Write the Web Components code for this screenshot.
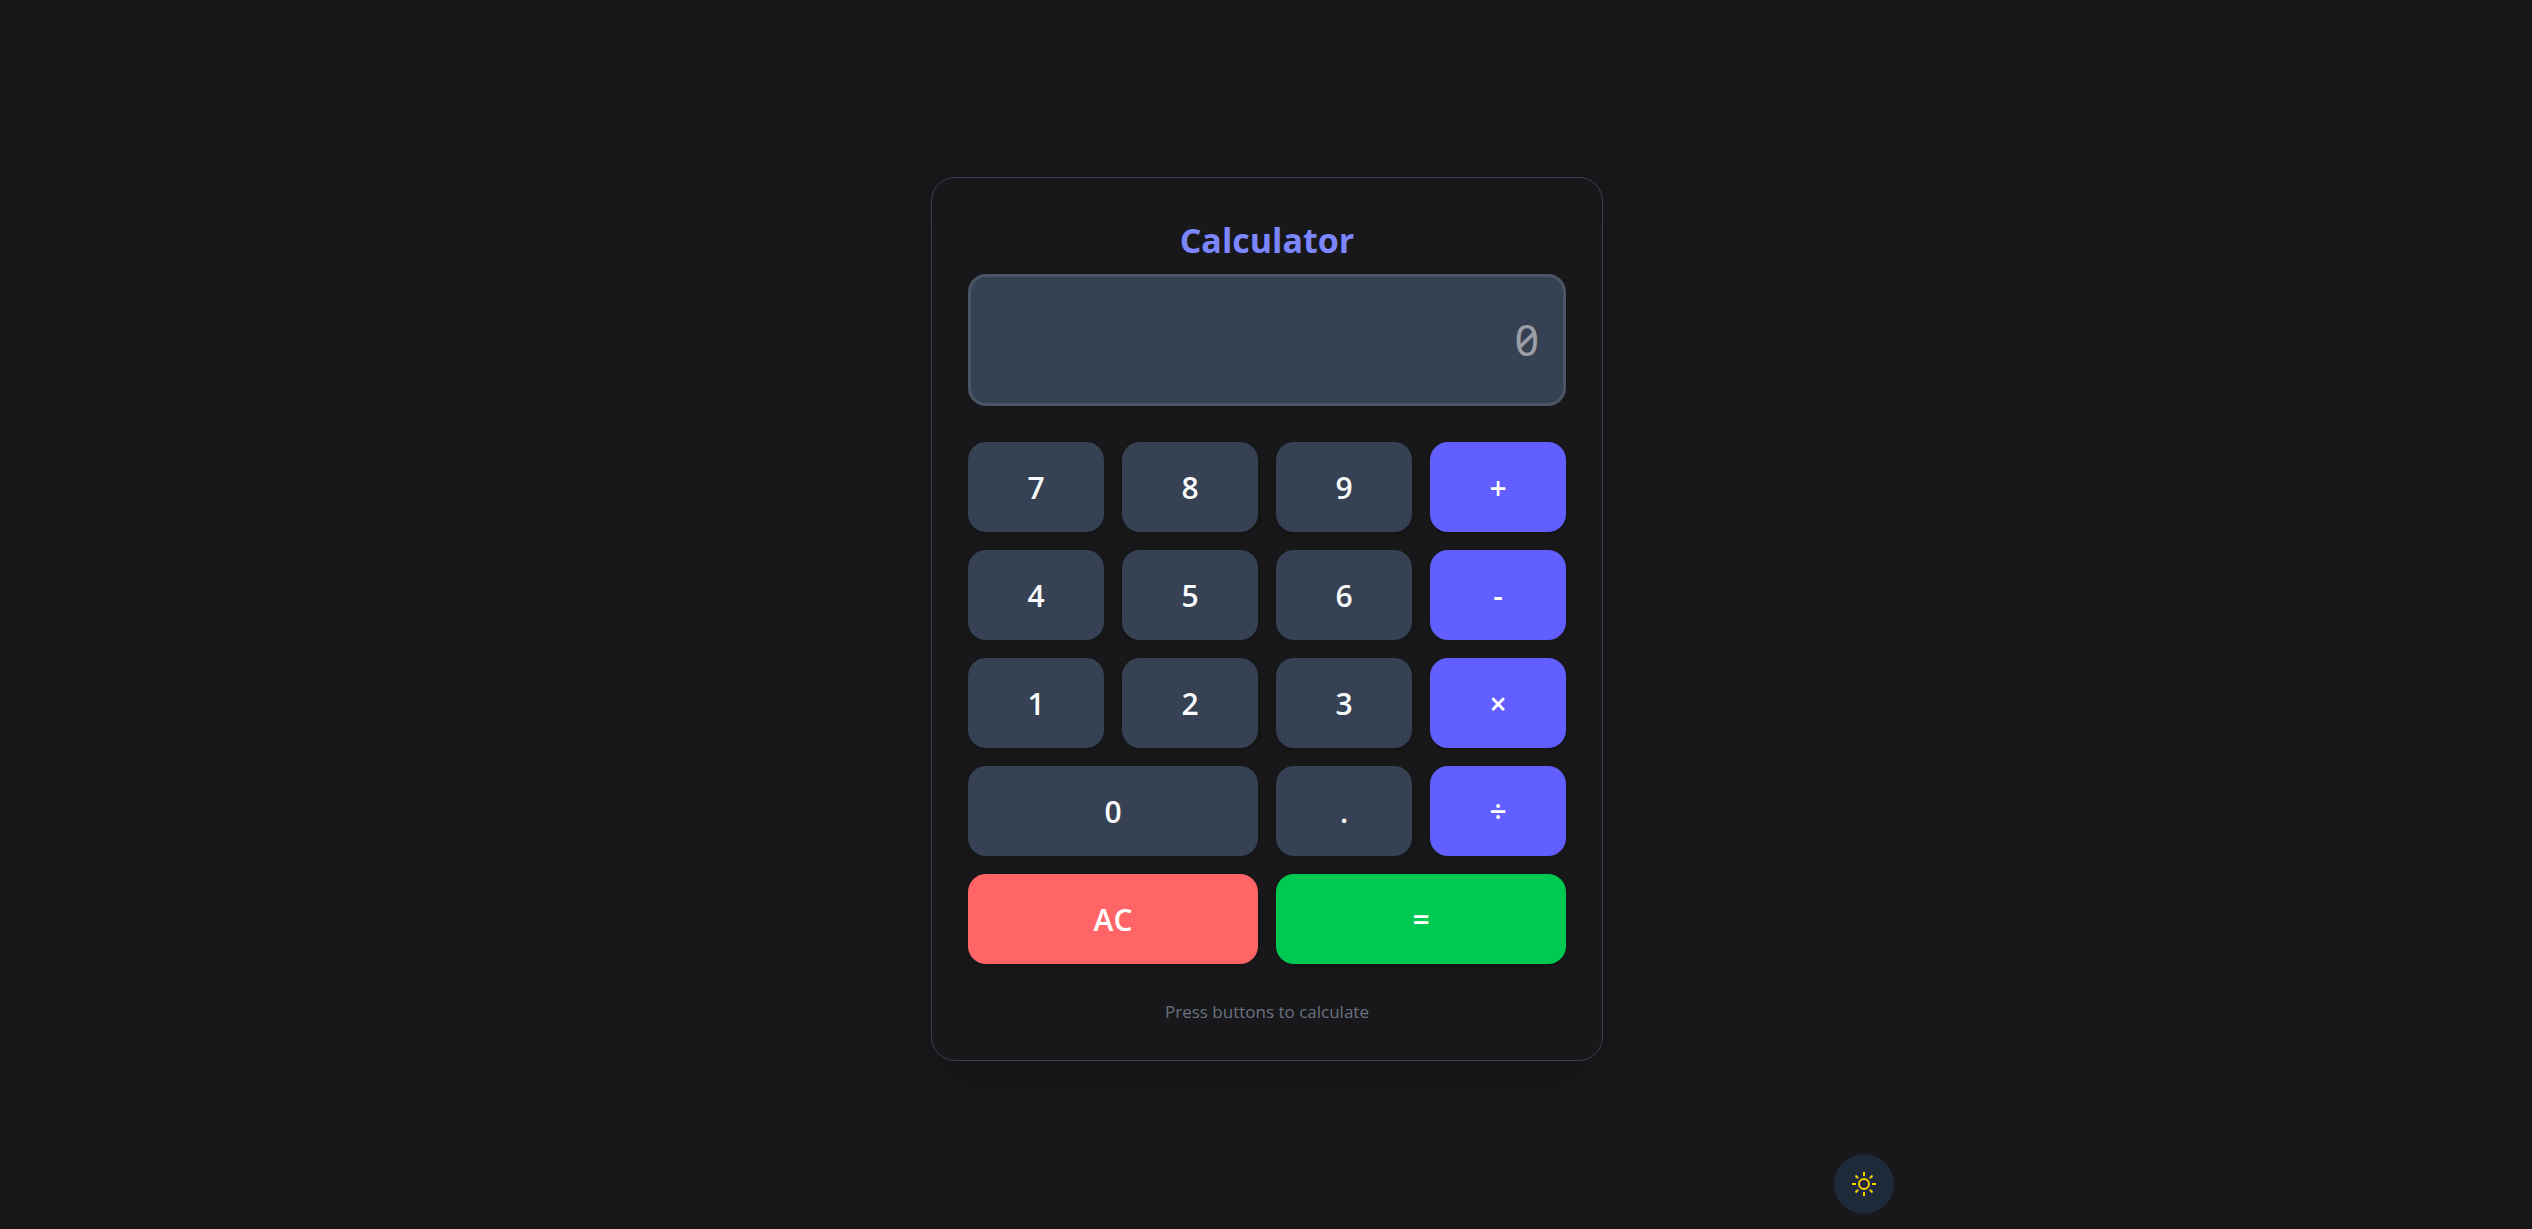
<!DOCTYPE html>
<html lang="en">
<head>
<meta charset="utf-8">
<title>Calculator</title>
<style>
  html, body { margin: 0; height: 100%; background: #18181a; }
  body { font-family: "Segoe UI", "Open Sans", "Noto Sans", sans-serif; }
</style>
</head>
<body>
<calc-page>
  <calc-card heading="Calculator">
    <calc-display slot="display"></calc-display>
    <calc-key>7</calc-key>
    <calc-key>8</calc-key>
    <calc-key>9</calc-key>
    <calc-key kind="operator">+</calc-key>
    <calc-key>4</calc-key>
    <calc-key>5</calc-key>
    <calc-key>6</calc-key>
    <calc-key kind="operator">-</calc-key>
    <calc-key>1</calc-key>
    <calc-key>2</calc-key>
    <calc-key>3</calc-key>
    <calc-key kind="operator">×</calc-key>
    <calc-key wide>0</calc-key>
    <calc-key>.</calc-key>
    <calc-key kind="operator">÷</calc-key>
    <calc-key kind="clear" wide>AC</calc-key>
    <calc-key kind="equals" wide>=</calc-key>
    <span slot="hint">Press buttons to calculate</span>
  </calc-card>
  <theme-toggle slot="tools"></theme-toggle>
</calc-page>

<script>
  class ShadowElement extends HTMLElement {
    constructor() {
      super();
      this.attachShadow({ mode: "open" }).innerHTML = this.constructor.markup;
    }
  }

  customElements.define("calc-page", class extends ShadowElement {
    static markup = `
      <style>
        :host { display: flex; flex-direction: column; box-sizing: border-box; min-height: 100%; background: #18181a; border-bottom: 2px solid #1a1214; }
        main { flex: 1; display: flex; justify-content: center; align-items: center; padding: 84px 16px 0 18px; }
        footer { box-sizing: border-box; width: 100%; max-width: 1256px; margin: 0 auto; padding-bottom: 13px; display: flex; justify-content: flex-end; }
      </style>
      <main><slot></slot></main>
      <footer><slot name="tools"></slot></footer>`;
  });

  customElements.define("calc-card", class extends ShadowElement {
    static markup = `
      <style>
        :host { display: block; box-sizing: border-box; width: 100%; max-width: 672px; padding: 36px; border: 1px solid #364153; border-radius: 24px; background: #18181a; box-shadow: 0 28px 56px -14px rgba(0, 0, 0, .25); }
        h1 { margin: 0; padding: 2px 0 10px; font-size: 34px; line-height: 48px; font-weight: 700; text-align: center; color: #7c86ff; }
        .keys { display: grid; grid-template-columns: repeat(4, 1fr); gap: 18px; margin-top: 36px; }
        p { margin: 36px 0 0; font-size: 17px; line-height: 24px; text-align: center; color: #6a7282; }
      </style>
      <h1></h1>
      <slot name="display"></slot>
      <div class="keys"><slot></slot></div>
      <p><slot name="hint"></slot></p>`;
    connectedCallback() {
      this.shadowRoot.querySelector("h1").textContent = this.getAttribute("heading");
    }
  });

  customElements.define("calc-display", class extends ShadowElement {
    static markup = `
      <style>
        :host { display: block; }
        input { display: block; box-sizing: border-box; width: 100%; height: 132px; margin: 0; padding: 0 24px 2px; border: 3px solid #4a5565; border-radius: 18px; background: #364153; color: #f3f4f6; font-family: "Noto Sans", monospace; font-size: 43px; font-feature-settings: "zero"; text-align: right; outline: none; }
        input::placeholder { color: #9b9ea5; opacity: 1; }
      </style>
      <input type="text" placeholder="0" aria-label="Result" readonly>`;
  });

  customElements.define("calc-key", class extends ShadowElement {
    static markup = `
      <style>
        :host { display: block; --fill: #364153; --ink: #f9fafb; }
        :host([wide]) { grid-column: span 2; }
        :host([kind="operator"]) { --fill: #615fff; --ink: #ffffff; }
        :host([kind="clear"]) { --fill: #ff6467; --ink: #ffffff; }
        :host([kind="equals"]) { --fill: #00c951; --ink: #ffffff; }
        button { display: block; box-sizing: border-box; width: 100%; height: 90px; margin: 0; padding: 1px 0 0; border: 0; border-radius: 18px; background: var(--fill); color: var(--ink); font: 600 30px/40px "Open Sans", "Noto Sans", sans-serif; box-shadow: 0 4px 7px -1px rgba(0, 0, 0, .1), 0 2px 4px -2px rgba(0, 0, 0, .1); cursor: pointer; }
      </style>
      <button type="button"><slot></slot></button>`;
  });

  customElements.define("theme-toggle", class extends ShadowElement {
    static markup = `
      <style>
        :host { display: block; }
        button { display: flex; align-items: center; justify-content: center; width: 60px; height: 60px; margin: 0; padding: 0; border: 0; border-radius: 50%; background: #1e2939; color: #fcc800; cursor: pointer; }
        svg { display: block; width: 24px; height: 24px; }
      </style>
      <button type="button" aria-label="Toggle theme">
        <svg viewBox="0 0 24 24" fill="none" stroke="currentColor" stroke-width="2">
          <circle cx="12" cy="12" r="5"/>
          <path d="M12 0v4M12 20v4M0 12h4M20 12h4M3.500 3.500l2.700 2.700M17.800 17.800l2.700 2.700M3.500 20.500l2.700-2.700M17.800 6.200l2.700-2.700"/>
        </svg>
      </button>`;
  });
</script>
</body>
</html>
